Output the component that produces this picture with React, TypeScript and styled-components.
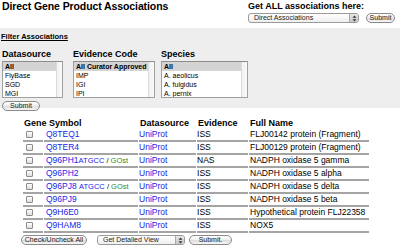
import styled, { createGlobalStyle } from "styled-components";

const GlobalStyle = createGlobalStyle`
	body {
		margin: 0;
		background: #fff;
		font-family: "Liberation Sans", Arial, sans-serif;
		color: #000;
	}
`;

const rows = [
	{ id: "Q8TEQ1", evidence: "ISS", name: "FLJ00142 protein (Fragment)" },
	{ id: "Q8TER4", evidence: "ISS", name: "FLJ00129 protein (Fragment)" },
	{ id: "Q96PH1", tools: "ATGCC", gap: false, evidence: "NAS", name: "NADPH oxidase 5 gamma" },
	{ id: "Q96PH2", evidence: "ISS", name: "NADPH oxidase 5 alpha" },
	{ id: "Q96PJ8", tools: "ATGCC", gap: true, evidence: "ISS", name: "NADPH oxidase 5 delta" },
	{ id: "Q96PJ9", evidence: "ISS", name: "NADPH oxidase 5 beta" },
	{ id: "Q9H6E0", evidence: "ISS", name: "Hypothetical protein FLJ22358" },
	{ id: "Q9HAM8", evidence: "ISS", name: "NOX5" },
];

const filters = [
	{ label: "Datasource", width: 61, space: 10, options: ["All", "FlyBase", "SGD", "MGI"] },
	{ label: "Evidence Code", width: 82, space: 6, options: ["All Curator Approved", "IMP", "IGI", "IPI"] },
	{ label: "Species", width: 87, space: 0, options: ["All", "A. aeolicus", "A. fulgidus", "A. pernix"] },
];

const Stepper = () => (
	<StepBox>
		<svg width="5" height="7" viewBox="0 0 5 7">
			<path d="M2.5 0.5 L4.5 2.8 L0.5 2.8 Z" fill="#333" />
			<path d="M2.5 6.5 L4.5 4.2 L0.5 4.2 Z" fill="#333" />
		</svg>
	</StepBox>
);

export default function App() {
	return (
		<Page>
			<GlobalStyle />
			<TopBar>
				<Title>Direct Gene Product Associations</Title>
				<AllGroup>
					<AllLabel>Get ALL associations here:</AllLabel>
					<ControlRow $gap={7}>
						<Select $width={111}>
							<span>Direct Associations</span>
							<Stepper />
						</Select>
						<Button $width={29}>Submit</Button>
					</ControlRow>
				</AllGroup>
			</TopBar>

			<FilterPanel>
				<FilterLink>Filter Associations</FilterLink>
				<Filters>
					{filters.map((f) => (
						<FilterGroup key={f.label} $width={f.width} $space={f.space}>
							<FilterLabel>{f.label}</FilterLabel>
							<ListBox>
								<Options>
									{f.options.map((o, i) => (
										<Option key={o} $selected={i === 0}>
											{o}
										</Option>
									))}
								</Options>
								<ScrollTrack />
							</ListBox>
						</FilterGroup>
					))}
				</Filters>
				<Button $width={38}>Submit</Button>
			</FilterPanel>

			<Results>
				<colgroup>
					<col style={{ width: 20 }} />
					<col style={{ width: 94 }} />
					<col style={{ width: 57 }} />
					<col style={{ width: 51 }} />
					<col style={{ width: 120 }} />
				</colgroup>
				<thead>
					<tr>
						<HeadCell colSpan={2}>Gene Symbol</HeadCell>
						<HeadCell>Datasource</HeadCell>
						<HeadCell>Evidence</HeadCell>
						<HeadCell>Full Name</HeadCell>
					</tr>
				</thead>
				<tbody>
					{rows.map((r) => (
						<tr key={r.id}>
							<CheckCell>
								<CheckBox />
							</CheckCell>
							<Cell $pad={2}>
								<Link>{r.id}</Link>
								{r.tools && (
									<>
										{r.gap ? " " : ""}
										<ToolLink>{r.tools}</ToolLink>
										<Slash> / </Slash>
										<GoLink>GOst</GoLink>
									</>
								)}
							</Cell>
							<Cell $pad={0}>
								<Link>UniProt</Link>
							</Cell>
							<Cell $pad={0}>{r.evidence}</Cell>
							<Cell $pad={1}>{r.name}</Cell>
						</tr>
					))}
				</tbody>
			</Results>

			<BottomBar>
				<Button $width={66}>Check/Uncheck All</Button>
				<Select $width={88}>
					<span>Get Detailed View</span>
					<Stepper />
				</Select>
				<Button $width={43}>Submit.</Button>
			</BottomBar>
		</Page>
	);
}

const Page = styled.div`
	width: 400px;
	height: 249px;
	overflow: hidden;
`;
const TopBar = styled.div`
	display: flex;
	justify-content: space-between;
	padding: 0 5px 0 2px;
	height: 28px;
`;
const Title = styled.h1`
	margin: 0;
	font-size: 10.5px;
	line-height: 12px;
	font-weight: 700;
	letter-spacing: -0.1px;
`;
const AllGroup = styled.div`
	display: flex;
	flex-direction: column;
	padding-top: 1px;
`;
const AllLabel = styled.div`
	font-size: 9px;
	font-weight: 700;
	line-height: 10px;
	margin-bottom: 2px;
`;
const ControlRow = styled.div<{ $gap: number }>`
	display: flex;
	align-items: center;
	gap: ${(p) => p.$gap}px;
`;
const Button = styled.div<{ $width: number }>`
	box-sizing: border-box;
	width: ${(p) => p.$width}px;
	height: 10px;
	border: 1px solid #8a8a8a;
	border-radius: 5px;
	background: linear-gradient(#ffffff, #f0f0f0 45%, #dedede 55%, #f6f6f6);
	font-size: 7px;
	line-height: 8px;
	color: #222;
	text-align: center;
	white-space: nowrap;
`;
const Select = styled.div<{ $width: number }>`
	box-sizing: border-box;
	width: ${(p) => p.$width}px;
	height: 10px;
	display: flex;
	align-items: center;
	justify-content: space-between;
	border: 1px solid #9a9a9a;
	border-radius: 3px;
	background: linear-gradient(#ffffff, #eeeeee);
	font-size: 7px;
	line-height: 8px;
	color: #222;
	padding-left: 5px;
	overflow: hidden;
`;
const StepBox = styled.span`
	display: flex;
	align-items: center;
	justify-content: center;
	width: 8px;
	height: 100%;
	border-left: 1px solid #aaa;
	background: linear-gradient(#e8e8e8, #c8c8c8);
`;
const FilterPanel = styled.div`
	background: #eeeeee;
	height: 80px;
	box-sizing: border-box;
	padding: 4px 0 0 2px;
`;
const FilterLink = styled.div`
	font-size: 7.5px;
	font-weight: 700;
	line-height: 9px;
	text-decoration: underline;
	margin-left: -1px;
`;
const Filters = styled.div`
	display: flex;
	margin-top: 8px;
	margin-bottom: 3px;
`;
const FilterGroup = styled.div<{ $width: number; $space: number }>`
	width: ${(p) => p.$width}px;
	margin-right: ${(p) => p.$space}px;
`;
const FilterLabel = styled.div`
	font-size: 9px;
	font-weight: 700;
	line-height: 11px;
	margin-bottom: 1px;
`;
const ListBox = styled.div`
	display: flex;
	height: 37px;
	box-sizing: border-box;
	border: 1px solid #a0a0a0;
	border-top-color: #8c8c8c;
	background: #fff;
`;
const Options = styled.div`
	flex: 1;
	overflow: hidden;
`;
const Option = styled.div<{ $selected: boolean }>`
	height: 9px;
	line-height: 9px;
	font-size: 7px;
	padding-left: 2px;
	white-space: nowrap;
	background: ${(p) => (p.$selected ? "#d4d4d4" : "transparent")};
	font-weight: ${(p) => (p.$selected ? 700 : 400)};
`;
const ScrollTrack = styled.div`
	width: 5px;
	border-left: 1px solid #dcdcdc;
	background: linear-gradient(90deg, #f0f0f0, #fafafa);
`;
const Results = styled.table`
	margin: 10px 0 0 22px;
	border-collapse: separate;
	border-spacing: 1px 0;
	table-layout: fixed;
	width: 348px;
`;
const HeadCell = styled.th`
	text-align: left;
	font-size: 9px;
	font-weight: 700;
	line-height: 11px;
	height: 11px;
	padding: 0 0 0 1px;
	white-space: nowrap;
`;
const Cell = styled.td<{ $pad: number }>`
	height: 11px;
	padding: 0 0 0 ${(p) => p.$pad}px;
	border-bottom: 2px solid #a4a4a4;
	font-size: 8.5px;
	line-height: 11px;
	white-space: nowrap;
	overflow: hidden;
`;
const CheckCell = styled.td`
	height: 11px;
	padding: 0 0 0 3px;
	border-bottom: 2px solid #a4a4a4;
	line-height: 0;
	vertical-align: middle;
`;
const CheckBox = styled.span`
	display: inline-block;
	box-sizing: border-box;
	width: 7px;
	height: 7px;
	border: 1px solid #8c8c8c;
	border-radius: 1px;
	background: linear-gradient(#ffffff, #dcdcdc);
`;
const Link = styled.span`
	color: #2323e6;
`;
const ToolLink = styled.span`
	color: #2323e6;
	font-size: 7.5px;
`;
const Slash = styled.span`
	font-size: 7.5px;
`;
const GoLink = styled.span`
	color: #2e8b2e;
	font-size: 7.5px;
`;
const BottomBar = styled.div`
	display: flex;
	align-items: center;
	gap: 4px;
	margin: 2px 0 0 21px;
	& > :first-child {
		margin-right: 6px;
	}
`;
